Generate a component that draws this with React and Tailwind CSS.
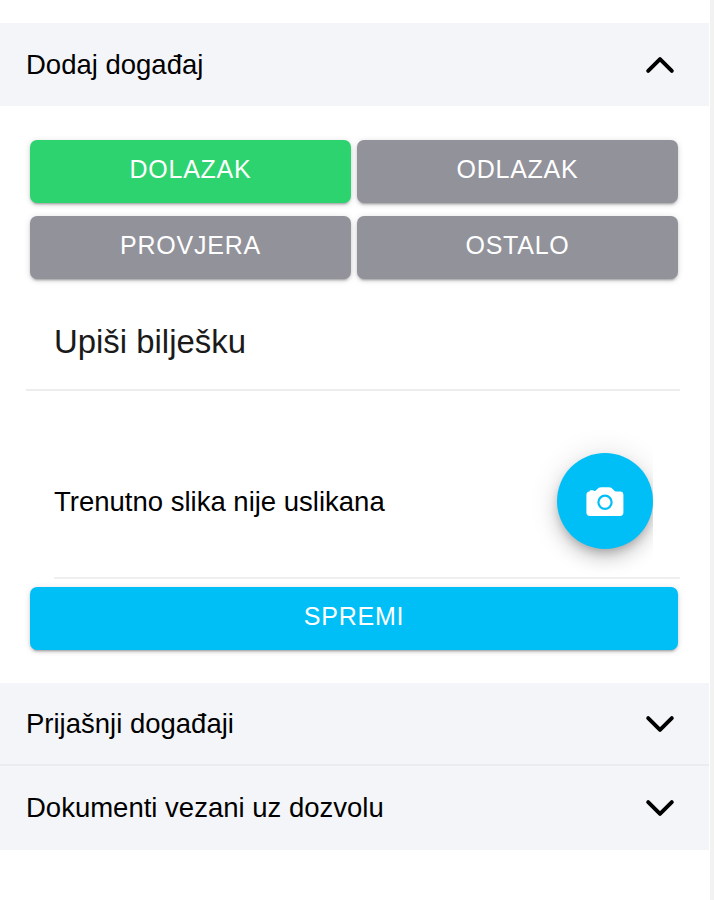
import React, { useState } from "react";
import clsx from "clsx";
import { IoChevronDown, IoChevronUp } from "react-icons/io5";

const eventTypes = ["Dolazak", "Odlazak", "Provjera", "Ostalo"];

const CameraIcon = () => (
  <svg width="42" height="42" viewBox="0 0 42 42" fill="currentColor">
    <path d="M5.6 11.5V11.1Q5.6 10.2 6.6 10.2H8.9Q9.8 10.2 10 11.1Q11.6 11.2 12.8 9.6Q14.6 7.2 17 7.2H25Q27.4 7.2 29.2 9.6Q30.6 11.5 32 11.5H36Q39.4 11.5 39.4 14.9V32.6Q39.4 36 36 36H5.8Q2.4 36 2.4 32.6V14.9Q2.4 11.8 5.6 11.5Z" />
    <circle cx="21" cy="22.3" r="6.6" fill="none" stroke="#00bff7" strokeWidth="2.2" />
  </svg>
);

const Button = ({ children, className, ...props }) => (
  <button
    className={clsx(
      "h-[63px] rounded-[7px] pb-1 text-[25px] leading-none tracking-[0.03em] text-white uppercase",
      "shadow-[0_4px_2px_-3px_rgba(0,0,0,0.2),0_2px_3px_0_rgba(0,0,0,0.14),0_1px_7px_0_rgba(0,0,0,0.12)]",
      className
    )}
    {...props}
  >
    {children}
  </button>
);

const AccordionHeader = ({ title, open, className, onClick }) => (
  <button
    className={clsx(
      "flex w-full items-center justify-between bg-[#f4f5f9] pr-[28px] pl-[26px] text-left text-[27.5px] leading-8",
      className
    )}
    onClick={onClick}
  >
    <span>{title}</span>
    {open ? <IoChevronUp size={42} /> : <IoChevronDown size={42} />}
  </button>
);

export default function App() {
  const [type, setType] = useState("Dolazak");
  const [open, setOpen] = useState(true);

  return (
    <div className="flex h-[900px] w-[714px] justify-between overflow-hidden bg-white font-['Liberation_Sans',Arial,sans-serif] text-black">
      <div className="w-[709px] pt-[23px]">
        <AccordionHeader
          title="Dodaj događaj"
          open={open}
          className="h-[83px]"
          onClick={() => setOpen(!open)}
        />

        {open && (
          <div className="h-[577px] pt-[34px] pr-[29px] pl-[26px]">
            <div className="grid grid-cols-2 gap-x-[6px] gap-y-[13px] pr-[2px] pl-1">
              {eventTypes.map((name) => (
                <Button
                  key={name}
                  className={type === name ? "bg-[#2dd36f]" : "bg-[#92929b]"}
                  onClick={() => setType(name)}
                >
                  {name}
                </Button>
              ))}
            </div>

            <div className="mt-[13px] flex h-[99px] items-center border-b-2 border-[#ededed] pt-[2px] pl-7">
              <input
                className="w-full text-[32.9px] outline-none placeholder:text-[#1a1a1a] placeholder:opacity-100"
                placeholder="Upiši bilješku"
              />
            </div>

            <div className="ml-7 flex h-[188px] items-center justify-between border-b-2 border-[#efefef] pr-[27px]">
              <span className="pt-9 text-[27.5px] leading-8">
                Trenutno slika nije uslikana
              </span>
              {/* the shadow is cut off at the slot's right edge */}
              <div className="flex h-full w-[125px] justify-end overflow-hidden pt-[62px]">
                <button className="flex size-24 items-center justify-center rounded-full bg-[#00bff7] text-white shadow-[0_5px_9px_-2px_rgba(0,0,0,0.2),0_10px_17px_0_rgba(0,0,0,0.14),0_2px_31px_0_rgba(0,0,0,0.12)]">
                  <CameraIcon />
                </button>
              </div>
            </div>

            <div className="flex pt-2 pr-[2px] pl-1">
              <Button className="grow bg-[#00bff7]">Spremi</Button>
            </div>
          </div>
        )}

        <AccordionHeader
          title="Prijašnji događaji"
          className="h-[83px] border-b-2 border-[#ebecf0]"
        />
        <AccordionHeader
          title="Dokumenti vezani uz dozvolu"
          className="h-[84px]"
        />
      </div>
      <div className="w-[4px] bg-[#f2f2f2]" />
    </div>
  );
}
